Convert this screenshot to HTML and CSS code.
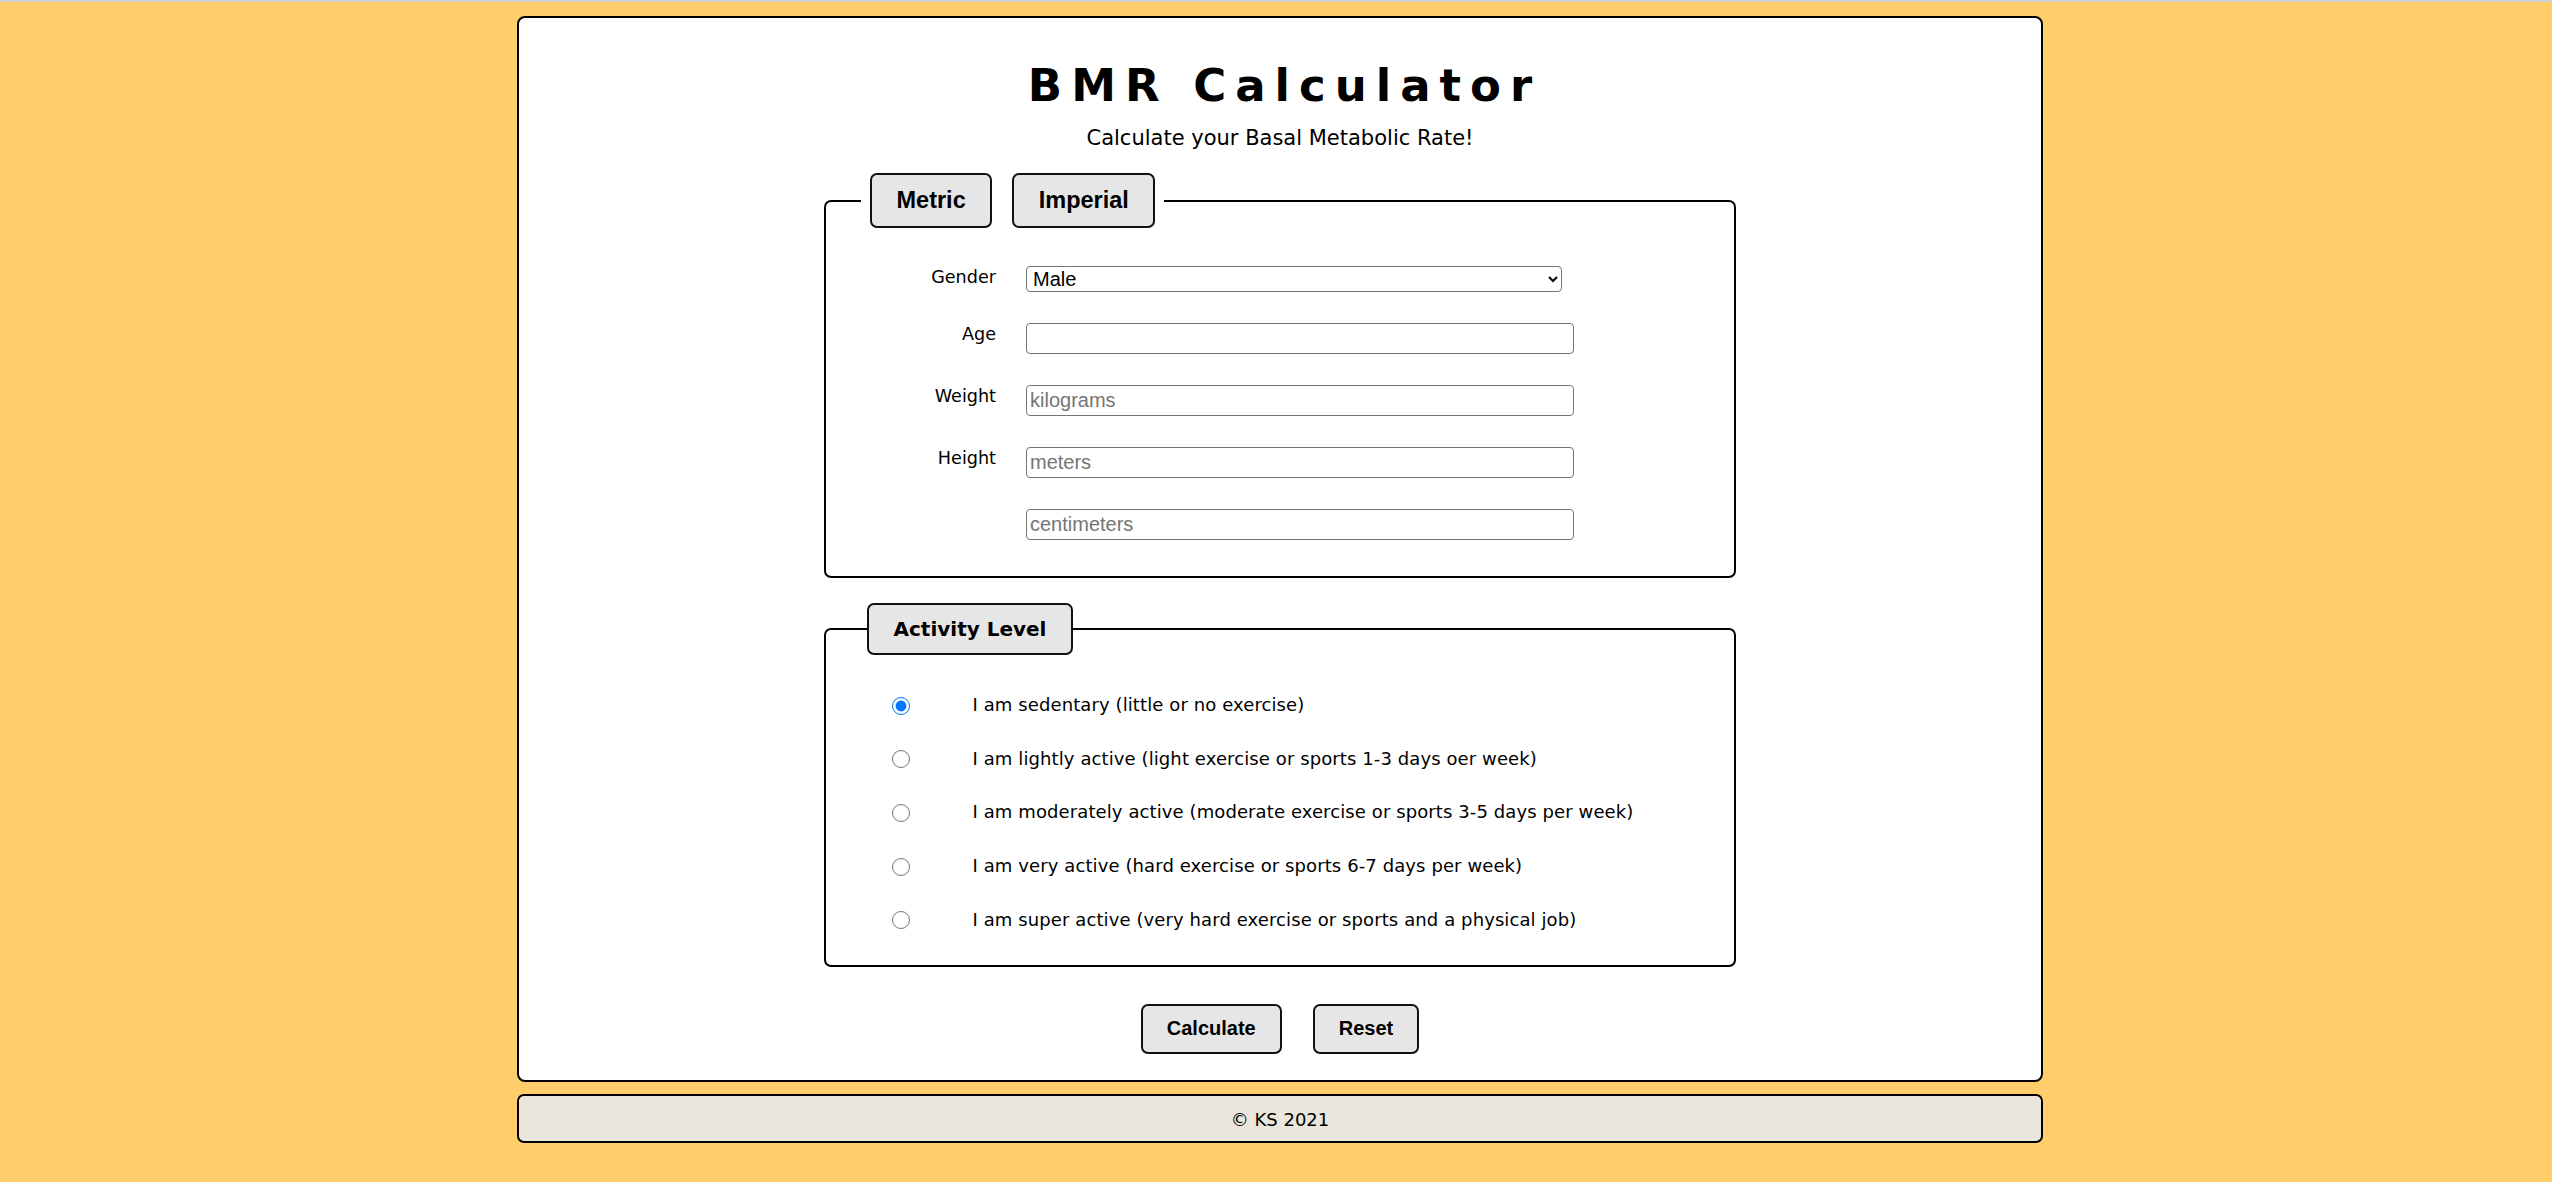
FILE: index.html
```html
<!DOCTYPE html>
<html lang="en">
<head>
<meta charset="utf-8">
<title>BMR Calculator</title>
<link rel="stylesheet" href="styles.css">
</head>
<body>
<div class="page">
  <main class="card">
    <h1 class="title">BMR Calculator</h1>
    <p class="subtitle">Calculate your Basal Metabolic Rate!</p>

    <fieldset class="panel panel-units">
      <legend class="units-legend">
        <button type="button" class="tab">Metric</button>
        <button type="button" class="tab">Imperial</button>
      </legend>
      <div class="form-grid">
        <label class="field-label" for="gender">Gender</label>
        <select id="gender" class="select">
          <option>Male</option>
          <option>Female</option>
        </select>

        <label class="field-label" for="age">Age</label>
        <input id="age" class="text-input" type="text">

        <label class="field-label" for="weight">Weight</label>
        <input id="weight" class="text-input" type="text" placeholder="kilograms">

        <label class="field-label" for="height-m">Height</label>
        <input id="height-m" class="text-input" type="text" placeholder="meters">

        <span class="field-label"></span>
        <input id="height-cm" class="text-input" type="text" placeholder="centimeters">
      </div>
    </fieldset>

    <fieldset class="panel panel-activity">
      <legend class="activity-legend">Activity Level</legend>
      <label class="radio-row"><input class="radio" type="radio" name="activity" checked><span class="radio-text">I am sedentary (little or no exercise)</span></label>
      <label class="radio-row"><input class="radio" type="radio" name="activity"><span class="radio-text">I am lightly active (light exercise or sports 1-3 days oer week)</span></label>
      <label class="radio-row"><input class="radio" type="radio" name="activity"><span class="radio-text">I am moderately active (moderate exercise or sports 3-5 days per week)</span></label>
      <label class="radio-row"><input class="radio" type="radio" name="activity"><span class="radio-text">I am very active (hard exercise or sports 6-7 days per week)</span></label>
      <label class="radio-row"><input class="radio" type="radio" name="activity"><span class="radio-text">I am super active (very hard exercise or sports and a physical job)</span></label>
    </fieldset>

    <div class="actions">
      <button type="button" class="btn">Calculate</button>
      <button type="button" class="btn">Reset</button>
    </div>
  </main>

  <footer class="footer">© KS 2021</footer>
</div>
</body>
</html>
```

FILE: styles.css
```css
html {
  background: #ffcd69;
}

body {
  margin: 0;
  border-top: 2px solid #cfcfcf;
  padding: 14px 0 0 8px;
  font-family: "DejaVu Sans", Verdana, sans-serif;
  font-size: 18px;
  color: #000;
}

.page {
  width: 1526px;
  margin: 0 auto;
}

.card {
  box-sizing: border-box;
  background: #fff;
  border: 2px solid #000;
  border-radius: 8px;
  padding: 0 0 26px;
  display: flex;
  flex-direction: column;
  align-items: center;
}

.title {
  margin: 42px 0 0;
  padding-left: 9px;
  font-size: 45px;
  line-height: 52px;
  font-weight: bold;
  letter-spacing: 9px;
}

.subtitle {
  margin: 14px 0 0;
  font-size: 21px;
  line-height: 25px;
}

.panel {
  box-sizing: border-box;
  width: 912px;
  margin: 0;
  border: 2px solid #000;
  border-radius: 7px;
  min-inline-size: 0;
}

.panel-units {
  margin-top: 22px;
  padding: 38px 0 36px 35px;
}

.units-legend {
  display: flex;
  gap: 20px;
  padding: 0 9px;
}

.tab {
  font-family: "Liberation Sans", Arial, sans-serif;
  font-weight: bold;
  font-size: 23.5px;
  line-height: 27px;
  padding: 12px 24.5px;
  margin: 0;
  background: #e6e6e6;
  border: 2px solid #111;
  border-radius: 7px;
  color: #000;
}

.form-grid {
  display: grid;
  grid-template-columns: 135px 548px;
  column-gap: 30px;
  row-gap: 31px;
  align-items: start;
}

.field-label {
  font-size: 17.6px;
  line-height: 21px;
  text-align: right;
  padding-top: 1px;
}

.select {
  box-sizing: border-box;
  width: 536px;
  height: 26px;
  font-family: "Liberation Sans", Arial, sans-serif;
  font-size: 20px;
  padding: 0 2px;
  border: 1px solid #767676;
  border-radius: 4px;
  background: #fff;
  color: #000;
}

.text-input {
  box-sizing: border-box;
  width: 548px;
  height: 31px;
  font-family: "Liberation Sans", Arial, sans-serif;
  font-size: 20px;
  padding: 0 3px;
  border: 1px solid #767676;
  border-radius: 4px;
  margin: 0;
}

.text-input::placeholder {
  color: #757575;
}

.panel-activity {
  margin-top: 25px;
  padding: 23px 0 19px 41px;
}

.activity-legend {
  font-weight: bold;
  font-size: 20px;
  line-height: 24px;
  padding: 12px 24.5px;
  background: #e6e6e6;
  border: 2px solid #111;
  border-radius: 7px;
}

.radio-row {
  display: flex;
  align-items: center;
  height: 53.6px;
}

.radio {
  width: 18px;
  height: 18px;
  margin: 2px 0 0 25px;
  flex: none;
}

.radio-text {
  margin-left: 62.5px;
  font-size: 18px;
  letter-spacing: 0.1px;
}

.actions {
  display: flex;
  gap: 31px;
  margin-top: 37px;
}

.btn {
  font-family: "Liberation Sans", Arial, sans-serif;
  font-weight: bold;
  font-size: 20px;
  line-height: 23px;
  padding: 11.5px 24px;
  margin: 0;
  background: #e6e6e6;
  border: 2px solid #111;
  border-radius: 7px;
  color: #000;
}

.footer {
  box-sizing: border-box;
  margin-top: 12px;
  height: 49px;
  padding: 13px 0 0;
  background: #ebe6dc;
  border: 2px solid #000;
  border-radius: 7px;
  text-align: center;
  font-size: 18px;
  line-height: 21px;
}
```
